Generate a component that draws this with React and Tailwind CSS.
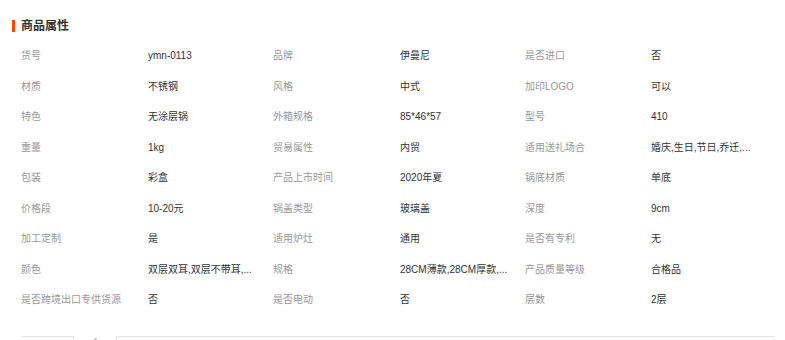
import React from "react";

const rows = [
  ["货号", "ymn-0113", "品牌", "伊曼尼", "是否进口", "否"],
  ["材质", "不锈钢", "风格", "中式", "加印LOGO", "可以"],
  ["特色", "无涂层锅", "外箱规格", "85*46*57", "型号", "410"],
  ["重量", "1kg", "贸易属性", "内贸", "适用送礼场合", "婚庆,生日,节日,乔迁,..."],
  ["包装", "彩盒", "产品上市时间", "2020年夏", "锅底材质", "单底"],
  ["价格段", "10-20元", "锅盖类型", "玻璃盖", "深度", "9cm"],
  ["加工定制", "是", "适用炉灶", "通用", "是否有专利", "无"],
  ["颜色", "双层双耳,双层不带耳,...", "规格", "28CM薄款,28CM厚款,...", "产品质量等级", "合格品"],
  ["是否跨境出口专供货源", "否", "是否电动", "否", "层数", "2层"],
];

export default function App() {
  return (
    <div
      className="w-[785px] h-[340px] overflow-hidden bg-white"
      style={{ fontFamily: '"Liberation Sans", Arial, "Noto Sans CJK SC", sans-serif' }}
    >
      <div className="pt-[20px] flex items-center h-[32px]">
        <div className="ml-[12px] w-[3px] h-[12px] bg-[#ff4400]" />
        <div className="ml-[6px] text-[12px] leading-[12px] font-bold text-[#333]">商品属性</div>
      </div>
      <div className="ml-[21px] mt-[8.5px] w-[754px] grid grid-cols-[127px_125px_127px_125px_126px_124px]">
        {rows.map((r, i) =>
          r.map((c, j) => (
            <div
              key={i + "-" + j}
              className={
                "h-[30.5px] flex items-center text-[10px] whitespace-nowrap overflow-hidden " +
                (j % 2 === 0 ? "text-[#999]" : "text-[#333]")
              }
            >
              {c}
            </div>
          ))
        )}
      </div>
      <div className="ml-[21px] mt-[21px] flex items-start">
        <div className="w-[53px] h-[10px] border-t border-r border-[#e3e3e3]" />
        <div className="w-[42px] h-[10px] flex justify-center">
          <div className="mt-[2px] w-[3px] h-[3px] rounded-full bg-[#b9c2d0]" />
        </div>
        <div className="w-[659px] h-[10px] border-t border-l border-[#e3e3e3]" />
      </div>
    </div>
  );
}
